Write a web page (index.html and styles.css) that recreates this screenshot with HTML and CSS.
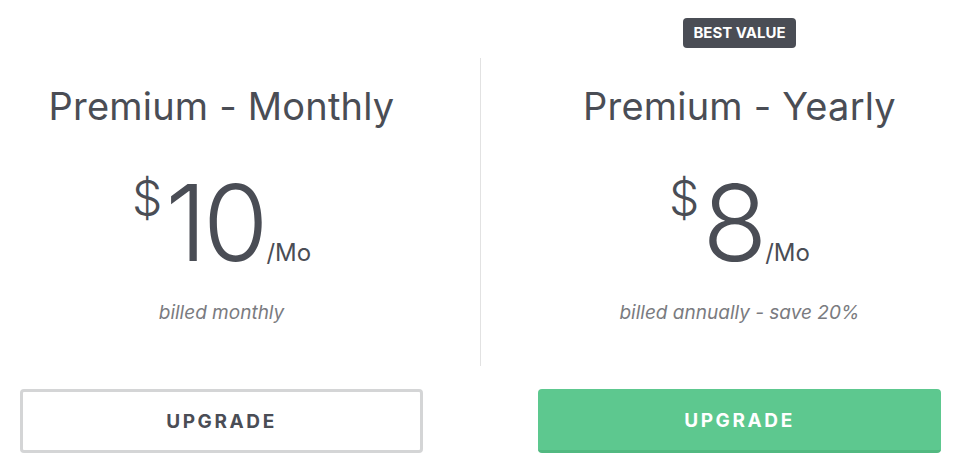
FILE: index.html
```html
<!DOCTYPE html>
<html>
<head>
<meta charset="utf-8">
<link rel="stylesheet" href="styles.css">
</head>
<body>
<div class="plans">
  <section class="plan">
    <div class="badge-slot"></div>
    <h2 class="title">Premium - Monthly</h2>
    <div class="price"><span class="cur">$</span><span class="amt">10</span><span class="per">/Mo</span></div>
    <p class="note">billed monthly</p>
    <button class="btn btn-outline">UPGRADE</button>
  </section>
  <div class="divider"></div>
  <section class="plan">
    <div class="badge-slot"><span class="badge">BEST VALUE</span></div>
    <h2 class="title">Premium - Yearly</h2>
    <div class="price"><span class="cur">$</span><span class="amt">8</span><span class="per">/Mo</span></div>
    <p class="note">billed annually - save 20%</p>
    <button class="btn btn-green">UPGRADE</button>
  </section>
</div>
</body>
</html>
```

FILE: styles.css
```css
html, body { margin: 0; padding: 0; background: #fff; }
body { font-family: Inter, Lato, sans-serif; color: #4a4d55; width: 960px; height: 466px; overflow: hidden; }
.plans {
  display: grid;
  grid-template-columns: 1fr 1px 1fr;
  column-gap: 57px;
  padding: 18px 19px 0 20px;
}
.plan { display: flex; flex-direction: column; align-items: center; }
.divider { background: #e2e2e2; margin-top: 40px; height: 308px; }
.badge-slot { height: 30px; display: flex; align-items: center; }
.badge {
  background: #4a4d55; color: #fff; font-weight: 700; font-size: 15px;
  padding: 0 10px; height: 30px; line-height: 30px; border-radius: 4px;
}
.title { font-weight: 400; font-size: 38px; margin: 35px 0 0; line-height: 46px; letter-spacing: 0.2px; }
.price { display: flex; align-items: baseline; margin-top: 41px; height: 110px; }
.cur { font-size: 48px; font-weight: 300; align-self: flex-start; margin-top: -2px; margin-right: 3px; }
.amt { font-size: 106px; font-weight: 300; line-height: 106px; letter-spacing: -4px; }
.per { font-size: 24px; margin-left: 2px; font-weight: 400; }
.note { font-style: italic; font-size: 19px; color: #7a7b80; margin: 21px 0 0; line-height: 24px; }
.btn {
  margin-top: 64px; width: 100%; height: 64px; border-radius: 4px; font-family: inherit;
  font-weight: 700; font-size: 19px; letter-spacing: 2.6px; cursor: pointer; padding-top: 2px;
}
.btn-outline { background: #fff; border: 3px solid #d4d5d6; color: #4a4d55; }
.btn-green { background: #5dc88f; border: none; border-bottom: 3px solid #52b981; color: #fff; }
```
